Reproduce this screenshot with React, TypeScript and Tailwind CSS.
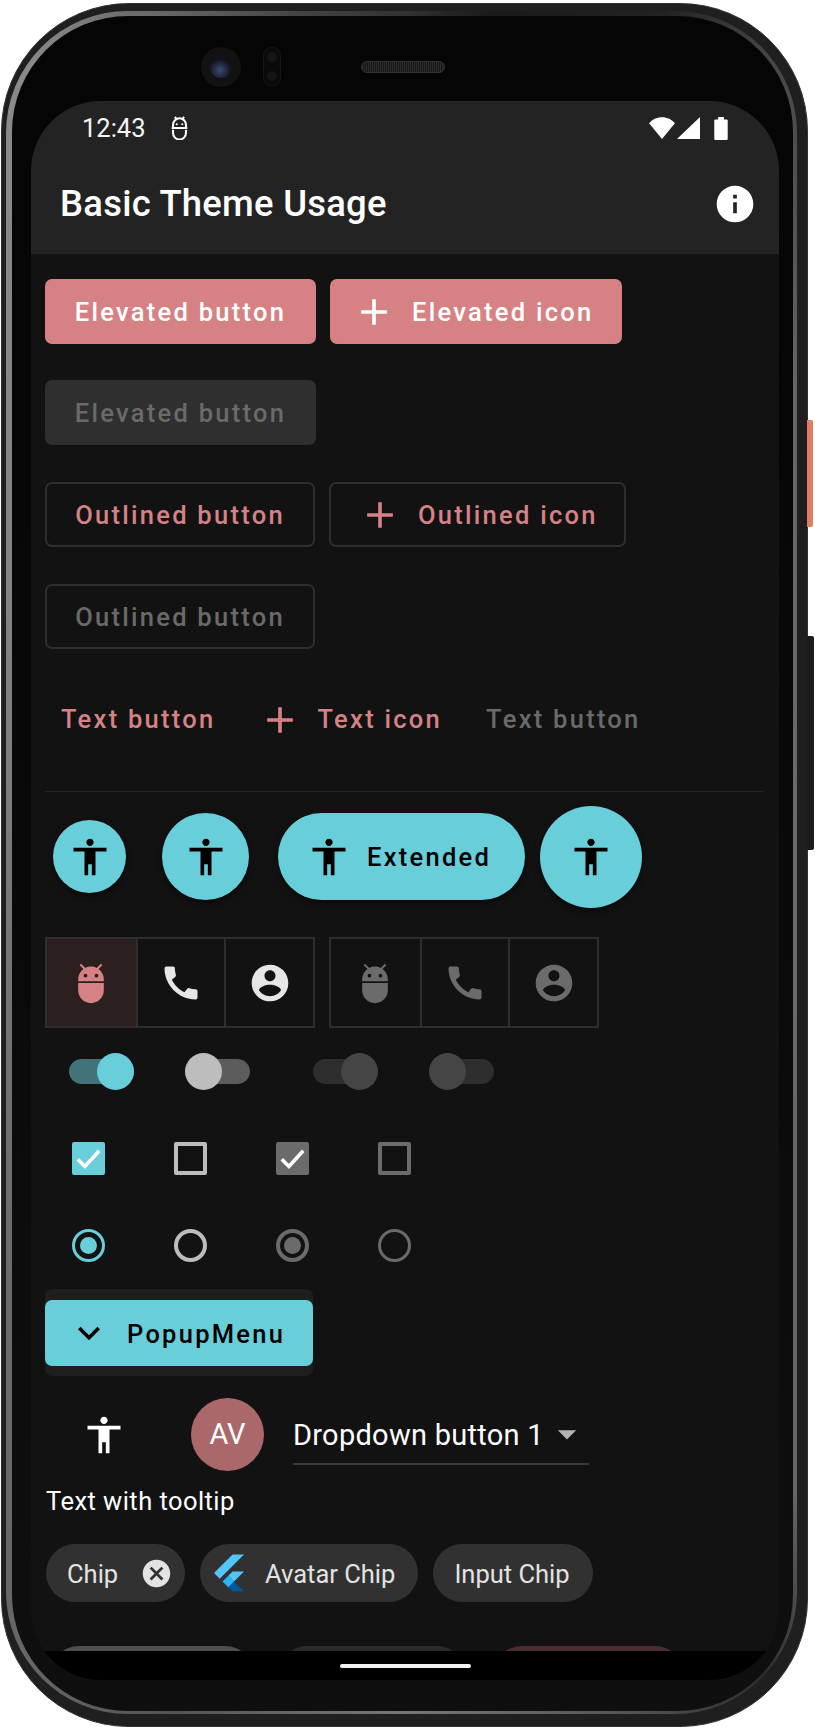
import type { ReactNode } from 'react'

const P = {
  accessibility: 'M12 2c1.1 0 2 .9 2 2s-.9 2-2 2-2-.9-2-2 .9-2 2-2zm9 7h-6v13h-2v-6h-2v6H9V9H3V7h18v2z',
  info: 'M12 2C6.48 2 2 6.48 2 12s4.48 10 10 10 10-4.48 10-10S17.52 2 12 2zm1 15h-2v-6h2v6zm0-8h-2V7h2v2z',
  add: 'M19 13h-6v6h-2v-6H5v-2h6V5h2v6h6v2z',
  adb: 'M5 16c0 3.87 3.13 7 7 7s7-3.13 7-7v-4H5v4zM16.12 4.37l2.1-2.1-.82-.83-2.3 2.31C14.16 3.28 13.12 3 12 3s-2.16.28-3.09.75L6.6 1.44l-.82.83 2.1 2.1C6.14 5.64 5 7.68 5 10v1h14v-1c0-2.32-1.14-4.36-2.88-5.63zM9 9c-.55 0-1-.45-1-1s.45-1 1-1 1 .45 1 1-.45 1-1 1zm6 0c-.55 0-1-.45-1-1s.45-1 1-1 1 .45 1 1-.45 1-1 1z',
  phone: 'M20.01 15.38c-1.23 0-2.42-.2-3.53-.56-.35-.12-.74-.03-1.01.24l-1.57 1.97c-2.83-1.35-5.48-3.9-6.89-6.83l1.95-1.66c.27-.28.35-.67.24-1.02-.37-1.11-.56-2.3-.56-3.53 0-.54-.45-.99-.99-.99H4.19C3.65 3 3 3.24 3 3.99 3 13.28 10.73 21 20.01 21c.71 0 .99-.63.99-1.18v-3.45c0-.54-.45-.99-.99-.99z',
  account: 'M12 2C6.48 2 2 6.48 2 12s4.48 10 10 10 10-4.48 10-10S17.52 2 12 2zm0 3c1.66 0 3 1.34 3 3s-1.34 3-3 3-3-1.34-3-3 1.34-3 3-3zm0 14.2c-2.5 0-4.71-1.28-6-3.22.03-1.99 4-3.08 6-3.08 1.99 0 5.97 1.09 6 3.08-1.29 1.94-3.5 3.22-6 3.22z',
  expand: 'M16.59 8.59L12 13.17 7.41 8.59 6 10l6 6 6-6z',
  drop: 'M7 10l5 5 5-5z',
  cancel: 'M12 2C6.47 2 2 6.47 2 12s4.47 10 10 10 10-4.47 10-10S17.53 2 12 2zm5 13.59L15.59 17 12 13.41 8.41 17 7 15.59 10.59 12 7 8.41 8.41 7 12 10.59 15.59 7 17 8.41 13.41 12 17 15.59z',
}

function Icon({ d, className }: { d: string; className: string }) {
  return (
    <svg viewBox="0 0 24 24" fill="currentColor" className={className}>
      <path d={d} />
    </svg>
  )
}

const btnText = 'text-[25.5px] font-medium tracking-[2.27px] leading-none whitespace-nowrap'

// the Flutter text sits a pixel lower than the browser centres it
function Label({ children, className = 'pt-[2px]' }: { children: ReactNode; className?: string }) {
  return <span className={className}>{children}</span>
}

function ToggleGroup({ disabled }: { disabled?: boolean }) {
  const cells = [P.adb, P.phone, P.account]
  return (
    <div className="flex h-[91px] border-2 border-[#2e2e2e]">
      {cells.map((d, i) => (
        <div
          key={i}
          className={
            'flex w-[88.7px] items-center justify-center ' +
            (i > 0 ? 'border-l-2 border-[#2e2e2e] ' : '') +
            (i === 0 && !disabled ? 'bg-[#2c1f1f] ' : '')
          }
        >
          <Icon
            d={d}
            className={
              'h-[44px] w-[44px] ' +
              (disabled ? 'text-[#6b6b6b]' : i === 0 ? 'text-[#d68285]' : 'text-[#e6e6e6]')
            }
          />
        </div>
      ))}
    </div>
  )
}

function Switch({ on, track, thumb, className }: { on?: boolean; track: string; thumb: string; className: string }) {
  return (
    <div className={'relative flex h-[37px] w-[65px] shrink-0 items-center ' + className}>
      <div className={'h-[25px] w-full rounded-full ' + track} />
      <div className={'absolute top-0 h-[37px] w-[37px] rounded-full ' + thumb + (on ? ' right-0' : ' left-0')} />
    </div>
  )
}

function Check({ kind }: { kind: 'on' | 'off' | 'disOn' | 'disOff' }) {
  if (kind === 'on' || kind === 'disOn') {
    return (
      <div className={'flex h-[33px] w-[33px] items-center justify-center rounded-[2px] ' + (kind === 'on' ? 'bg-[#68ceda]' : 'bg-[#6b6b6b]')}>
        <svg viewBox="0 0 24 24" className="h-[33px] w-[33px]" fill="none" stroke="#fff" strokeWidth="2.6">
          <path d="M4.2 12.6l5.2 5.2L19.8 6.4" />
        </svg>
      </div>
    )
  }
  return <div className={'h-[33px] w-[33px] rounded-[2px] border-4 ' + (kind === 'off' ? 'border-[#bdbdbd]' : 'border-[#6b6b6b]')} />
}

function Radio({ color, dot }: { color: string; dot?: string }) {
  return (
    <div className={'flex h-[33px] w-[33px] items-center justify-center rounded-full ' + color}>
      {dot && <div className={'h-[17px] w-[17px] rounded-full ' + dot} />}
    </div>
  )
}

function Row({ className, children }: { className: string; children: ReactNode }) {
  return <div className={'flex items-center ' + className}>{children}</div>
}

function Screen() {
  return (
    <div className="flex h-[1579px] w-[748px] shrink-0 flex-col overflow-hidden rounded-[70px] bg-[#121212] font-['Roboto',sans-serif] text-white">
      <header className="flex h-[153px] shrink-0 flex-col bg-[#232323]">
        <div className="flex h-[53px] items-center pl-[51px] pr-[51px] pt-[1px]">
          <span className="pt-[2px] text-[25.5px] leading-none text-[#f5f5f5]">12:43</span>
          <svg viewBox="1 0 18 26" className="ml-[25px] h-[24px] w-[17px]" fill="none" stroke="#fff" strokeWidth="2.2">
            <path d="M3 15v3.500a7 7 0 0 0 14 0V15M1.500 13h17M3 13V9.500a7 7 0 0 1 14 0V13M5 1l2.500 3.200M15 1l-2.500 3.200" />
            <circle cx="7" cy="9" r="1.100" fill="#fff" stroke="none" />
            <circle cx="13" cy="9" r="1.100" fill="#fff" stroke="none" />
          </svg>
          <div className="ml-auto flex items-center">
            <svg viewBox="0 0 27 23" className="h-[22px] w-[26px]" fill="#fff">
              <path d="M13.500 23L0 6.500C3.200 2.600 8 .2 13.500 .2S23.800 2.600 27 6.500z" />
            </svg>
            <svg viewBox="0 0 24 24" className="ml-[2px] h-[22px] w-[23px]" fill="#fff" preserveAspectRatio="none">
              <path d="M24 0v24H0z" />
            </svg>
            <svg viewBox="0 0 14 24" className="ml-[14px] h-[23px] w-[14px]" fill="#fff">
              <path d="M4 0h6v2.500h3a1 1 0 0 1 1 1V23a1 1 0 0 1-1 1H1a1 1 0 0 1-1-1V3.500a1 1 0 0 1 1-1h3z" />
            </svg>
          </div>
        </div>
        <div className="flex flex-1 items-center justify-between pl-[29px] pr-[22px]">
          <span className="text-[36.4px] font-medium leading-none tracking-[0.27px]">Basic Theme Usage</span>
          <Icon d={P.info} className="h-[44px] w-[44px]" />
        </div>
      </header>

      <main className="min-h-0 flex-1 overflow-hidden px-[14px] pt-[25px]">
        <Row className="h-[65px] gap-[14px]">
          <div className={'flex h-[65px] w-[271px] items-center justify-center rounded-[7px] bg-[#d68285] ' + btnText}><Label>Elevated button</Label></div>
          <div className={'flex h-[65px] w-[292px] items-center rounded-[7px] bg-[#d68285] pl-[22px] ' + btnText}>
            <Icon d={P.add} className="mr-[16px] h-[44px] w-[44px]" />
            <Label>Elevated icon</Label>
          </div>
        </Row>
        <Row className="mt-[36px] h-[65px]">
          <div className={'flex h-[65px] w-[271px] items-center justify-center rounded-[7px] bg-[#2f2f2f] text-[#6a6a6a] ' + btnText}><Label>Elevated button</Label></div>
        </Row>
        <Row className="mt-[37px] h-[65px] gap-[14px]">
          <div className={'flex h-[65px] w-[270px] items-center justify-center rounded-[7px] border-2 border-[#2e2e2e] text-[#d68285] ' + btnText}><Label>Outlined button</Label></div>
          <div className={'flex h-[65px] w-[297px] items-center rounded-[7px] border-2 border-[#2e2e2e] pl-[27px] text-[#d68285] ' + btnText}>
            <Icon d={P.add} className="mr-[16px] h-[44px] w-[44px]" />
            <Label>Outlined icon</Label>
          </div>
        </Row>
        <Row className="mt-[37px] h-[65px]">
          <div className={'flex h-[65px] w-[270px] items-center justify-center rounded-[7px] border-2 border-[#2e2e2e] text-[#6a6a6a] ' + btnText}><Label>Outlined button</Label></div>
        </Row>
        <Row className={'mt-[38px] h-[65px] pl-[16px] text-[#d68285] ' + btnText}>
          <Label className="">Text button</Label>
          <Icon d={P.add} className="ml-[42px] mr-[16px] h-[44px] w-[44px]" />
          <Label className="">Text icon</Label>
          <Label className="ml-[44px] text-[#6a6a6a]">Text button</Label>
        </Row>

        <div className="mt-[39px] h-[1px] w-[719px] bg-[#242424]" />

        <Row className="mt-[14px] h-[101px] text-black">
          <div className="ml-[8px] flex h-[73px] w-[73px] items-center justify-center rounded-full bg-[#68ceda] shadow-[0_3px_6px_rgba(0,0,0,0.5)]">
            <Icon d={P.accessibility} className="h-[44px] w-[44px]" />
          </div>
          <div className="ml-[36px] flex h-[87px] w-[87px] items-center justify-center rounded-full bg-[#68ceda] shadow-[0_3px_6px_rgba(0,0,0,0.5)]">
            <Icon d={P.accessibility} className="h-[44px] w-[44px]" />
          </div>
          <div className={'ml-[29px] flex h-[87px] w-[247px] items-center rounded-full bg-[#68ceda] pl-[29px] shadow-[0_3px_6px_rgba(0,0,0,0.5)] ' + btnText}>
            <Icon d={P.accessibility} className="mr-[16px] h-[44px] w-[44px]" />
            <Label>Extended</Label>
          </div>
          <div className="ml-[15px] flex h-[102px] w-[102px] shrink-0 items-center justify-center rounded-full bg-[#68ceda] shadow-[0_3px_6px_rgba(0,0,0,0.5)]">
            <Icon d={P.accessibility} className="h-[44px] w-[44px]" />
          </div>
        </Row>

        <Row className="mt-[30px] gap-[14px]">
          <ToggleGroup />
          <ToggleGroup disabled />
        </Row>

        <Row className="mt-[25px] h-[37px]">
          <Switch on track="bg-[#43737a]" thumb="bg-[#68ceda]" className="ml-[24px]" />
          <Switch track="bg-[#5c5c5c]" thumb="bg-[#bdbdbd]" className="ml-[51px]" />
          <Switch on track="bg-[#2e2e2e]" thumb="bg-[#454545]" className="ml-[63px]" />
          <Switch track="bg-[#2e2e2e]" thumb="bg-[#454545]" className="ml-[51px]" />
        </Row>

        <Row className="mt-[52px] h-[33px] gap-[69px] pl-[27px]">
          <Check kind="on" />
          <Check kind="off" />
          <Check kind="disOn" />
          <Check kind="disOff" />
        </Row>

        <Row className="mt-[54px] h-[33px] gap-[69px] pl-[27px]">
          <Radio color="border-[3px] border-[#68ceda]" dot="bg-[#68ceda]" />
          <Radio color="border-4 border-[#bdbdbd]" />
          <Radio color="border-4 border-[#6b6b6b]" dot="bg-[#6b6b6b]" />
          <Radio color="border-[3px] border-[#6b6b6b]" />
        </Row>

        <div className="mt-[27px] flex h-[87px] w-[268px] items-center rounded-[7px] bg-[#1e1e1e]">
          <div className={'flex h-[66px] w-full items-center rounded-[7px] bg-[#68ceda] pl-[22px] text-black ' + btnText}>
            <Icon d={P.expand} className="mr-[16px] h-[44px] w-[44px]" />
            <Label className="pt-[4px]">PopupMenu</Label>
          </div>
        </div>

        <Row className="mt-[22px] h-[73px]">
          <Icon d={P.accessibility} className="ml-[37px] h-[44px] w-[44px]" />
          <div className="ml-[65px] flex h-[73px] w-[73px] items-center justify-center rounded-full bg-[#ab686b] text-[29px] leading-none">AV</div>
          <div className="ml-[29px] flex h-[67px] w-[296px] items-center justify-between self-start border-b-2 border-[#3a3a3a] pt-[7px]">
            <Label className="whitespace-nowrap pt-[2px] text-[29px] leading-none tracking-[0.27px]">Dropdown button 1</Label>
            <Icon d={P.drop} className="h-[44px] w-[44px] text-[#b3b3b3]" />
          </div>
        </Row>

        <div className="ml-[1px] mt-[15px] h-[30px] text-[25.5px] leading-[30px] tracking-[0.45px]">Text with tooltip</div>

        <Row className="ml-[1px] mt-[28px] h-[58px] gap-[15px] text-[25.5px] leading-none text-[#e3e3e3]">
          <div className="flex h-[58px] w-[139px] items-center rounded-full bg-[#313131] pl-[21px]">
            <Label className="pt-[4px]">Chip</Label>
            <Icon d={P.cancel} className="ml-[22px] h-[33px] w-[33px]" />
          </div>
          <div className="flex h-[58px] w-[218px] items-center rounded-full bg-[#313131] pl-[12px]">
            <svg viewBox="0 0 166 202" className="mr-[19px] h-[42px] w-[34px]">
              <polygon points="37.7,128.9 9.8,101 100.4,10.4 156.2,10.4" fill="#54c5f8" />
              <polygon points="156.2,94 100.4,94 79.5,114.9 107.4,142.8" fill="#54c5f8" />
              <polygon points="79.5,170.7 100.4,191.6 156.2,191.6 107.4,142.8" fill="#01579b" />
              <polygon points="79.5,114.9 51.6,142.8 79.5,170.7 107.4,142.8" fill="#29b6f6" />
            </svg>
            <Label className="pt-[4px]">Avatar Chip</Label>
          </div>
          <div className="flex h-[58px] w-[160px] items-center justify-center rounded-full bg-[#313131] pr-[2px]">
            <Label className="pt-[4px]">Input Chip</Label>
          </div>
        </Row>

        <Row className="mt-[44px] h-[58px]">
          <div className="ml-[5px] h-[58px] w-[204px] rounded-[29px] bg-[#4f4f4f]" />
          <div className="ml-[24px] h-[58px] w-[188px] rounded-[29px] bg-[#2b2b2b]" />
          <div className="ml-[27px] h-[58px] w-[191px] rounded-[29px] bg-[#4a2d32]" />
        </Row>
      </main>

      <div className="flex h-[29px] shrink-0 items-center justify-center bg-black">
        <div className="h-[4px] w-[131px] rounded-full bg-[#f0f0f0]" />
      </div>
    </div>
  )
}

export default function App() {
  return (
    <div className="relative h-[1727px] w-[815px] overflow-hidden bg-white">
      <div className="absolute left-[807px] top-[420px] h-[107px] w-[6px] rounded-r-[2px] bg-[#e27c66]" />
      <div className="absolute left-[807px] top-[636px] h-[214px] w-[7px] rounded-r-[2px] bg-[#1c1c1c]" />

      <div className="ml-[1px] mt-[3px] h-[1724px] w-[807px] rounded-[128px] border border-[#333] bg-[#1f1f1f] pb-[12px] pl-[4px] pr-[10px] pt-[7px]">
        <div className="h-full w-full rounded-[122px] bg-[conic-gradient(from_0deg,#333_0deg,#1a1a1a_6deg,#222_17deg,#444_24deg,#666_40deg,#6a6a6a_90deg,#666_148deg,#2c2c2c_156deg,#555_165deg,#777_180deg,#555_195deg,#666_205deg,#7a7a7a_270deg,#8a8a8a_335deg,#444_353deg,#333_360deg)] pb-[3px] pl-[6px] pr-[4px] pt-[5px]">
          <div className="flex h-full w-full flex-col rounded-[116px] bg-gradient-to-b from-[#050506] to-[#0f0f0f] pl-[19px] pr-[14px]">
            <div className="flex h-[85px] shrink-0 items-center pl-[170px] pt-[16px]">
              <div className="flex h-[40px] w-[40px] items-center justify-center rounded-full bg-[#121212]">
                <div className="h-[22px] w-[22px] rounded-full bg-[radial-gradient(circle_at_45%_65%,#3a4a72_0%,#12131a_60%)]" />
              </div>
              <div className="ml-[22px] flex h-[40px] w-[18px] flex-col items-center justify-around rounded-full border border-[#161616] bg-[#0a0a0a]">
                <div className="h-[10px] w-[10px] rounded-full bg-[#151515]" />
                <div className="h-[10px] w-[10px] rounded-full bg-[#151515]" />
              </div>
              <div className="ml-[80px] h-[12px] w-[84px] rounded-full border border-[#333] bg-[repeating-linear-gradient(90deg,#2c2c2c_0_1px,#161616_1px_2px)]" />
            </div>
            <Screen />
          </div>
        </div>
      </div>
    </div>
  )
}
